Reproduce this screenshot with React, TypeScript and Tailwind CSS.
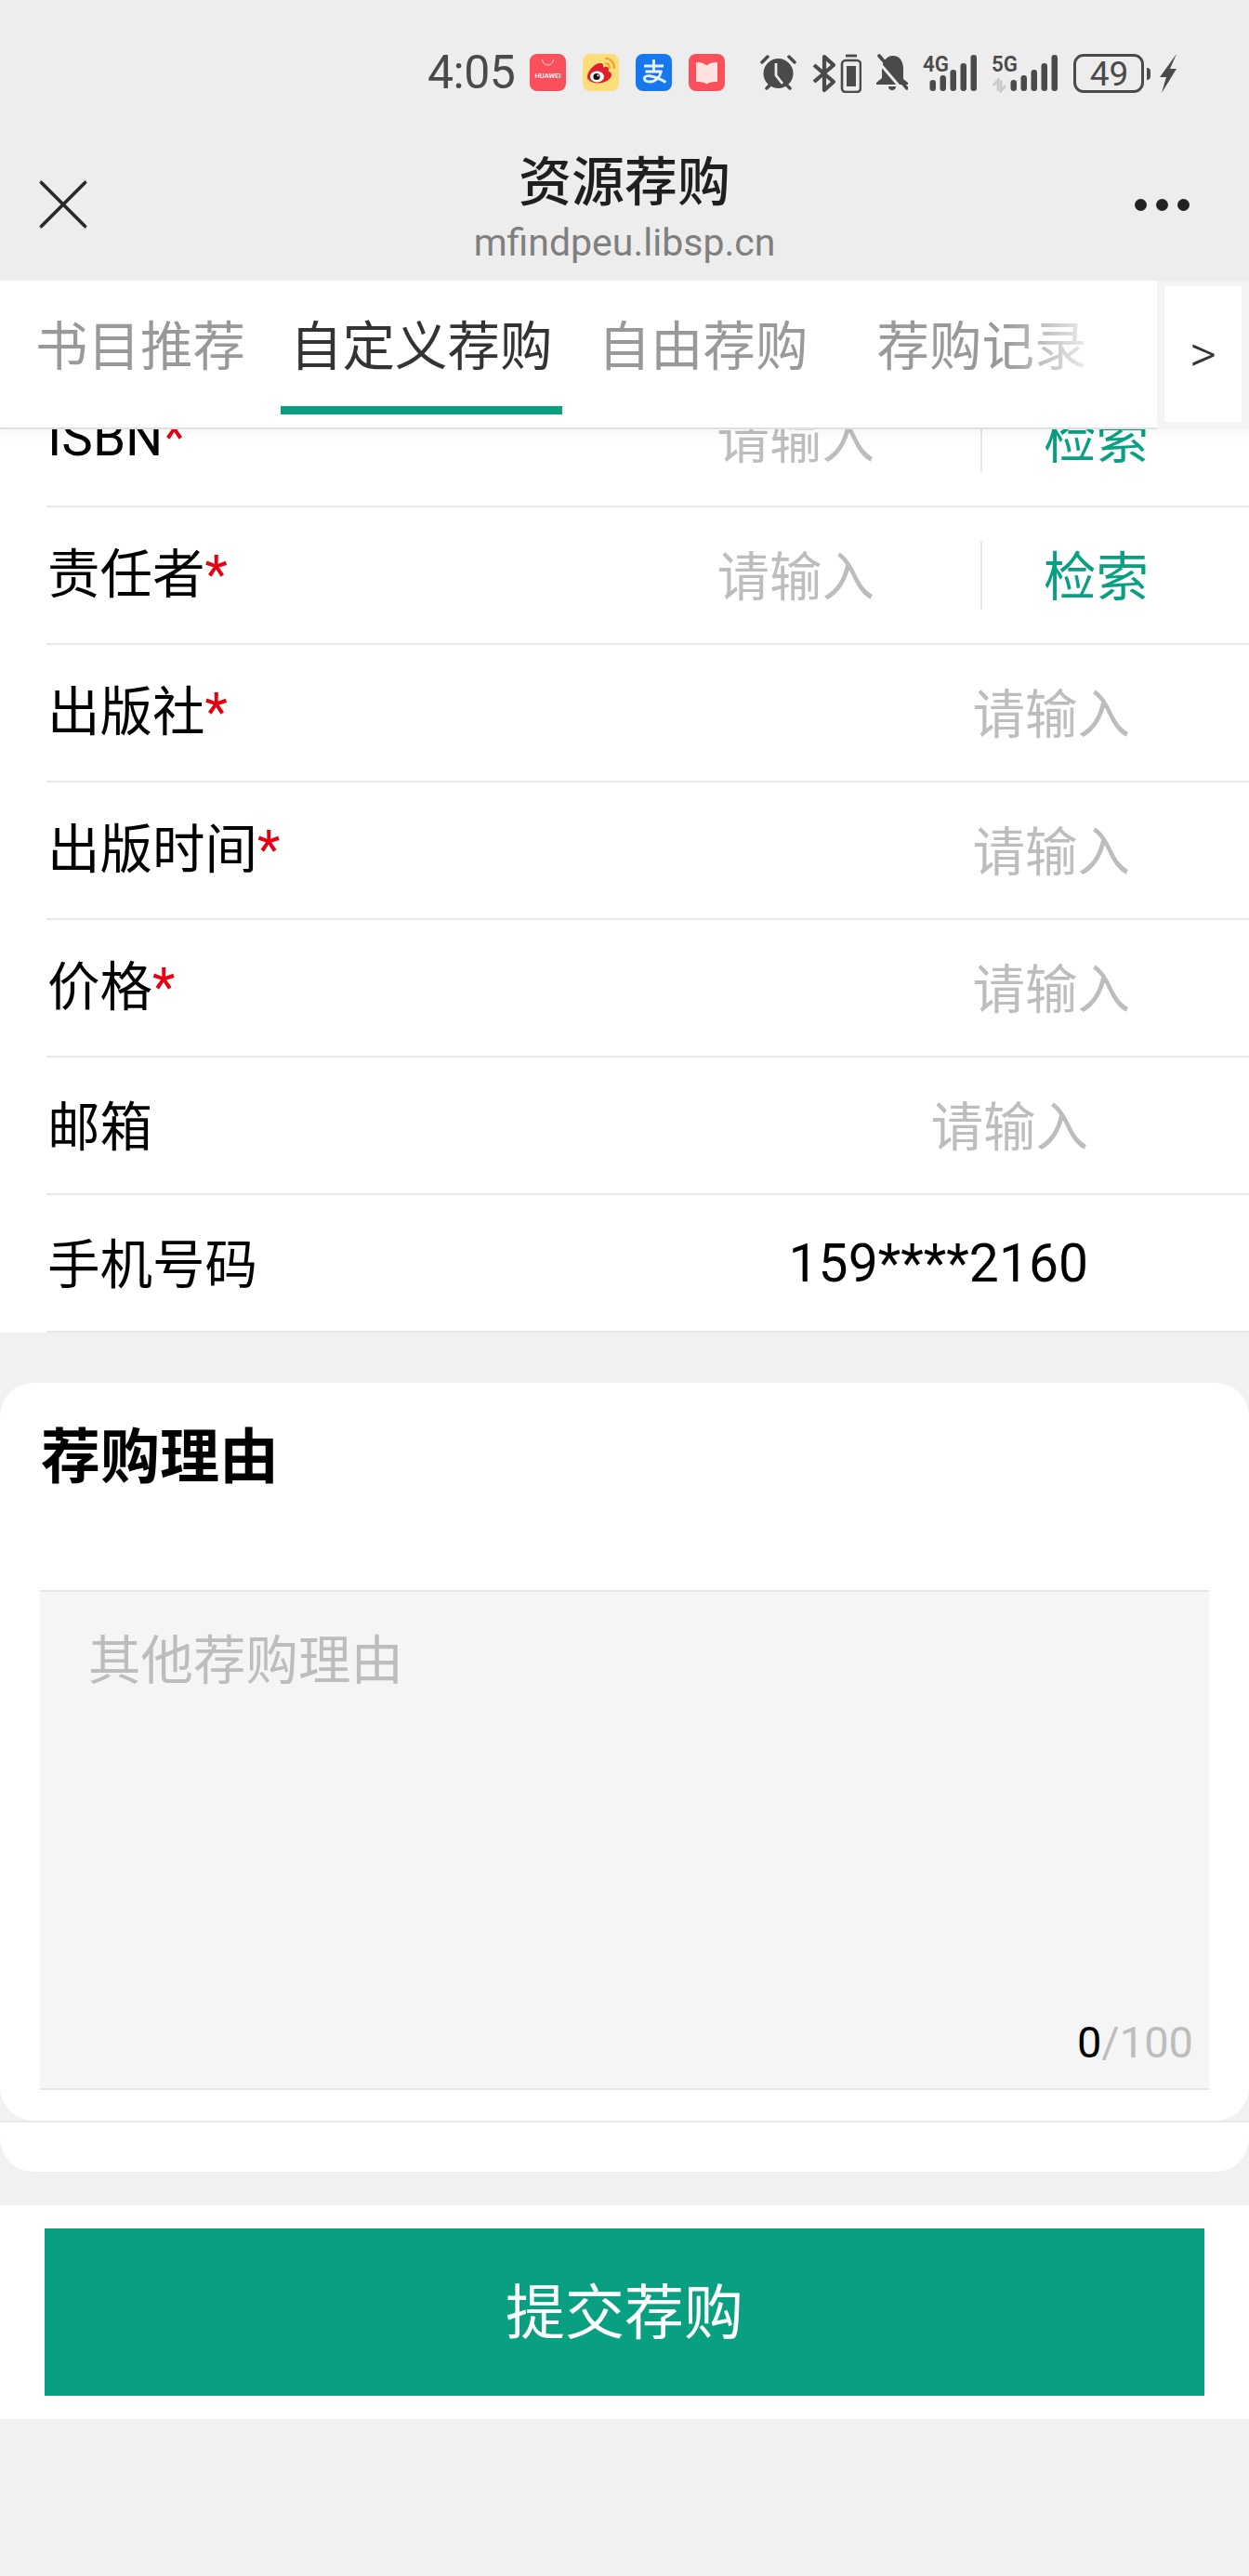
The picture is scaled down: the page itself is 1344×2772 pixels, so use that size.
import { X } from 'lucide-react';

const cjk = "font-['Noto_Sans_CJK_SC','Noto_Sans',sans-serif]";
const latin = "font-['Roboto','Noto_Sans_CJK_SC',sans-serif]";

function HuaweiLogo() {
  return (
    <svg viewBox="0 0 39 40" className="h-10 w-[39px] shrink-0" aria-hidden>
      <rect width="39" height="40" rx="8" fill="#f9505c" />
      <path d="M13.500 6c.5 4 3 6 6 6s5.500-2 6-6" fill="none" stroke="#fff" strokeWidth="1" opacity=".85" />
      <text x="19.500" y="26" textAnchor="middle" fontSize="7.600" fontWeight="500" fill="#fff" fontFamily="Roboto, sans-serif">HUAWEI</text>
    </svg>
  );
}

function WeiboLogo() {
  return (
    <svg viewBox="0 0 39 40" className="ml-[18px] h-10 w-[39px] shrink-0" aria-hidden>
      <rect width="39" height="40" rx="8" fill="#fddc7a" />
      <path d="M25 5c5 0 9 4 9 10M25 10.500c2.500 0 4 2 4 4.500" fill="none" stroke="#eda32b" strokeWidth="2.200" strokeLinecap="round" />
      <path d="M5 25c0-7 8-15 14-15 3 0 3.500 2 3 4.500 4-1.500 6-.5 6 2 0 1-.3 1.500-.5 2 2 .7 3.500 2 3.500 4 0 4.500-7 9-14 9-6 0-12-2.500-12-6.500z" fill="#e0202a" />
      <ellipse cx="15.500" cy="24.500" rx="7.500" ry="6" fill="#fff" />
      <circle cx="15" cy="24.500" r="3.600" fill="#111" />
      <circle cx="16.500" cy="23.200" r="1" fill="#fff" />
    </svg>
  );
}

function AlipayLogo() {
  return (
    <svg viewBox="0 0 39 40" className="ml-[18px] h-10 w-[39px] shrink-0" aria-hidden>
      <rect width="39" height="40" rx="8" fill="#1677ee" />
      <path d="M9 13h21M19.500 6v12M10.500 19h17c-1.500 6-6 11-12 11-4 0-6-1.500-6-3.500 0-5 11-3 23 4" fill="none" stroke="#e8f3ff" strokeWidth="2.800" strokeLinejoin="round" />
    </svg>
  );
}

function BookLogo() {
  return (
    <svg viewBox="0 0 39 40" className="ml-[18px] h-10 w-[39px] shrink-0" aria-hidden>
      <rect width="39" height="40" rx="8" fill="#f9505c" />
      <path d="M8 9c5 0 9 1 11.500 3.500C22 10 26 9 31 9v21c-5 0-9 .5-11.500 2.500C17 30.500 13 30 8 30z" fill="#ffe3e1" />
    </svg>
  );
}

function AlarmIcon() {
  return (
    <svg viewBox="0 0 39 40" className="ml-[38px] h-10 w-[39px] shrink-0" aria-hidden>
      <circle cx="19.500" cy="21" r="16" fill="#4a4a4a" />
      <path d="M2 9l6-6M37 9l-6-6M7 37l4-4M32 37l-4-4" stroke="#4a4a4a" strokeWidth="3.500" strokeLinecap="round" />
      <path d="M17 10v13l7 9" fill="none" stroke="#ededed" strokeWidth="2.800" />
    </svg>
  );
}

function BluetoothVibrateIcon() {
  return (
    <svg viewBox="0 0 53 42" className="ml-[17px] h-[42px] w-[53px] shrink-0" aria-hidden>
      <path d="M2 12l21 18-10 9V3l10 9L2 30" fill="none" stroke="#4a4a4a" strokeWidth="4.200" strokeLinejoin="round" />
      <rect x="32" y="7" width="20" height="34" rx="4" fill="none" stroke="#4a4a4a" strokeWidth="2.600" />
      <rect x="37" y="13" width="10" height="22" fill="#4a4a4a" />
      <path d="M36 2h12" stroke="#4a4a4a" strokeWidth="2.800" />
    </svg>
  );
}

function BellOffIcon() {
  return (
    <svg viewBox="0 0 34 40" className="ml-[16px] h-10 w-[34px] shrink-0" aria-hidden>
      <path d="M6 18C6 8 11 2 18 2c7 0 11 6 11 14v11l5 4v2H0v-2l6-5z" fill="#4a4a4a" />
      <path d="M13 35h8a4 4 0 0 1-8 0z" fill="#4a4a4a" />
      <path d="M0 6l30 35" stroke="#ededed" strokeWidth="3" />
      <path d="M3 2l30 35" stroke="#4a4a4a" strokeWidth="3.600" strokeLinecap="round" />
    </svg>
  );
}

function SignalIcon({ label, width, arrows }: { label: string; width: number; arrows?: boolean }) {
  // bars line up on the right edge, label sits above the short ones
  const heights = [39, 30, 23, 17, 12];
  return (
    <svg viewBox={`0 0 ${width} 42`} width={width} height={42} className="shrink-0" aria-hidden>
      <text x="0" y="19" fontSize="24" fontWeight="600" fill="#4a4a4a" textLength="28" lengthAdjust="spacingAndGlyphs" fontFamily="Roboto, sans-serif">{label}</text>
      {heights.map((h, i) => (
        <rect key={h} x={width - 6.500 - i * 11} y={40 - h} width="6.500" height={h} rx="3.200" fill="#4a4a4a" />
      ))}
      {arrows && <path d="M7 40V28l-5 6M10 28v12l5-6" fill="none" stroke="#c9c9c9" strokeWidth="2.600" />}
    </svg>
  );
}

function BatteryIcon() {
  return (
    <div className="ml-[17px] flex shrink-0 items-center">
      <div className={`${latin} flex h-[42px] w-[76px] items-center justify-center rounded-[11px] border-[3px] border-[#4a4a4a] text-[37px] leading-none text-[#4a4a4a]`}>
        49
      </div>
      <div className="ml-[3px] h-[13px] w-[4px] rounded-r-sm bg-[#4a4a4a]" />
      <svg viewBox="0 0 20 42" className="ml-[9px] h-[42px] w-[20px]" aria-hidden>
        <path d="M19 0L1 25h7L3 42l16-26h-7l7-16z" fill="#4a4a4a" />
      </svg>
    </div>
  );
}

function StatusBar() {
  return (
    <div className="flex h-[170px] items-start pl-[460px] pt-[58px]">
      <div className={`${latin} mr-4 mt-[-7px] text-[50px] leading-[54px] tracking-[-0.5px] text-[#4a4a4a]`}>4:05</div>
      <HuaweiLogo />
      <WeiboLogo />
      <AlipayLogo />
      <BookLogo />
      <AlarmIcon />
      <BluetoothVibrateIcon />
      <BellOffIcon />
      <div className="ml-4">
        <SignalIcon label="4G" width={58} />
      </div>
      <div className="ml-4">
        <SignalIcon label="5G" width={71} arrows />
      </div>
      <BatteryIcon />
    </div>
  );
}

function NavBar() {
  return (
    <div className="flex h-[132px] items-start justify-between px-[30px]">
      <div className="flex h-[100px] w-[96px] items-center">
        <X className="ml-[-9px] h-[94px] w-[94px] text-[#2a2a2a]" strokeWidth={0.950} />
      </div>
      <div className="flex flex-col items-center">
        <div className={`${cjk} mt-[-7px] text-[57px] font-medium leading-[56px] text-[#1f1f1f]`}>资源荐购</div>
        <div className={`${latin} mt-[19px] text-[41px] leading-[46px] text-[#7f7f7f]`}>mfindpeu.libsp.cn</div>
      </div>
      <div className="flex h-[100px] w-[96px] items-center justify-end gap-[10px] pr-[34px]">
        <span className="h-[13px] w-[13px] shrink-0 rounded-full bg-[#222]" />
        <span className="h-[13px] w-[13px] shrink-0 rounded-full bg-[#222]" />
        <span className="h-[13px] w-[13px] shrink-0 rounded-full bg-[#222]" />
      </div>
    </div>
  );
}

const tabs = [
  { label: '书目推荐', cls: 'ml-[28px] px-[10px] text-[#999]' },
  { label: '自定义荐购', cls: 'ml-[28px] px-[10px] text-[#333]', active: true },
  { label: '自由荐购', cls: 'ml-[29px] px-[10px] text-[#999]' },
  { label: '荐购记录', cls: 'ml-[54px] px-[10px] text-[#999]' },
];

function TabBar() {
  return (
    <div className="relative z-10 flex h-[160px] bg-[#f4f4f4] shadow-[0_6px_10px_rgba(0,0,0,0.03)]">
      <div className={`${cjk} relative flex h-full w-[1245px] shrink-0 items-stretch border-b-2 border-[#e0e0e0] bg-white`}>
        {tabs.map((tab) => (
          <div key={tab.label} className={`relative flex h-[144px] shrink-0 items-center pb-[12px] text-[56.500px] leading-none ${tab.cls}`}>
            {tab.label}
            {tab.active && <div className="absolute inset-x-0 bottom-0 h-[9px] bg-[#08a080]" />}
          </div>
        ))}
        <div className="absolute bottom-0 left-[1080px] top-0 w-[110px] bg-gradient-to-r from-transparent to-white" />
      </div>
      <div className={`${latin} mb-[8px] ml-[8px] mt-[6px] flex w-[83px] items-center justify-center bg-white text-[56px] font-light leading-none text-[#333]`}>
        &gt;
      </div>
    </div>
  );
}

const rows = [
  { label: 'ISBN', required: true, placeholder: '请输入', search: true },
  { label: '责任者', required: true, placeholder: '请输入', search: true },
  { label: '出版社', required: true, placeholder: '请输入' },
  { label: '出版时间', required: true, placeholder: '请输入' },
  { label: '价格', required: true, placeholder: '请输入' },
  { label: '邮箱', placeholder: '请输入', shifted: true },
  { label: '手机号码', value: '159****2160' },
];

function FormRow({ row }: { row: (typeof rows)[number] }) {
  return (
    <div className="ml-[50px] flex h-[148px] items-center border-b-2 border-[#e8e8e8] pl-[1px]">
      <div className={`${cjk} flex-1 pb-[5px] text-[56.500px] leading-none text-black`}>
        {row.label === 'ISBN' ? <span className={latin}>{row.label}</span> : row.label}
        {row.required && <span className={`${latin} text-[#e60012]`}>*</span>}
      </div>
      {row.value && <div className={`${latin} pr-[173px] text-[57px] leading-none text-black`}>{row.value}</div>}
      {row.placeholder && row.search && (
        <>
          <div className={`${cjk} pb-[5px] text-[56.500px] leading-none text-[#bdbdbd]`}>{row.placeholder}</div>
          <div className={`${cjk} ml-[114px] flex h-[74px] w-[289px] items-center border-l-2 border-[#e6e6e6] pb-[6px] pl-[66px] text-[56.500px] leading-none text-[#08a080]`}>
            检索
          </div>
        </>
      )}
      {row.placeholder && !row.search && (
        <div className={`${cjk} pb-[5px] text-[56.500px] leading-none text-[#bdbdbd] ${row.shifted ? 'pr-[173px]' : 'pr-[128px]'}`}>{row.placeholder}</div>
      )}
    </div>
  );
}

function Form() {
  return (
    <div className="h-[972px] overflow-hidden bg-white">
      <div className="mt-[-64px]">
        {rows.map((row) => (
          <FormRow key={row.label} row={row} />
        ))}
      </div>
    </div>
  );
}

function ReasonCard() {
  return (
    <div className={`${cjk} mt-[54px]`}>
      <div className="h-[794px] rounded-[36px] bg-white px-[43px] pt-[42px]">
        <div className="pl-[1px] text-[64px] font-bold leading-[64px] text-black">荐购理由</div>
        <div className="relative mt-[117px] h-[538px] border-y-2 border-[#e5e5e5] bg-[#f5f5f5] px-[52px] pt-[41px]">
          <div className="text-[56.500px] leading-[56px] text-[#bdbdbd]">其他荐购理由</div>
          <div className={`${latin} absolute bottom-[26px] right-[17px] text-[47px] leading-none text-[#bdbdbd]`}>
            <span className="text-black">0</span>/100
          </div>
        </div>
      </div>
      <div className="h-[55px] rounded-b-[36px] border-t-2 border-[#e8e8e8] bg-white" />
    </div>
  );
}

function SubmitBar() {
  return (
    <div className="mt-[36px] bg-white px-[48px] py-[25px]">
      <button type="button" className={`${cjk} flex h-[180px] w-full items-center justify-center bg-[#08a080] pb-[10px] text-[64px] leading-none text-white`}>
        提交荐购
      </button>
    </div>
  );
}

export default function App() {
  return (
    <div className="min-h-[2772px] w-[1344px] bg-[#f1f1f1]">
      <div className="bg-[#ededed]">
        <StatusBar />
        <NavBar />
      </div>
      <TabBar />
      <Form />
      <ReasonCard />
      <SubmitBar />
    </div>
  );
}
